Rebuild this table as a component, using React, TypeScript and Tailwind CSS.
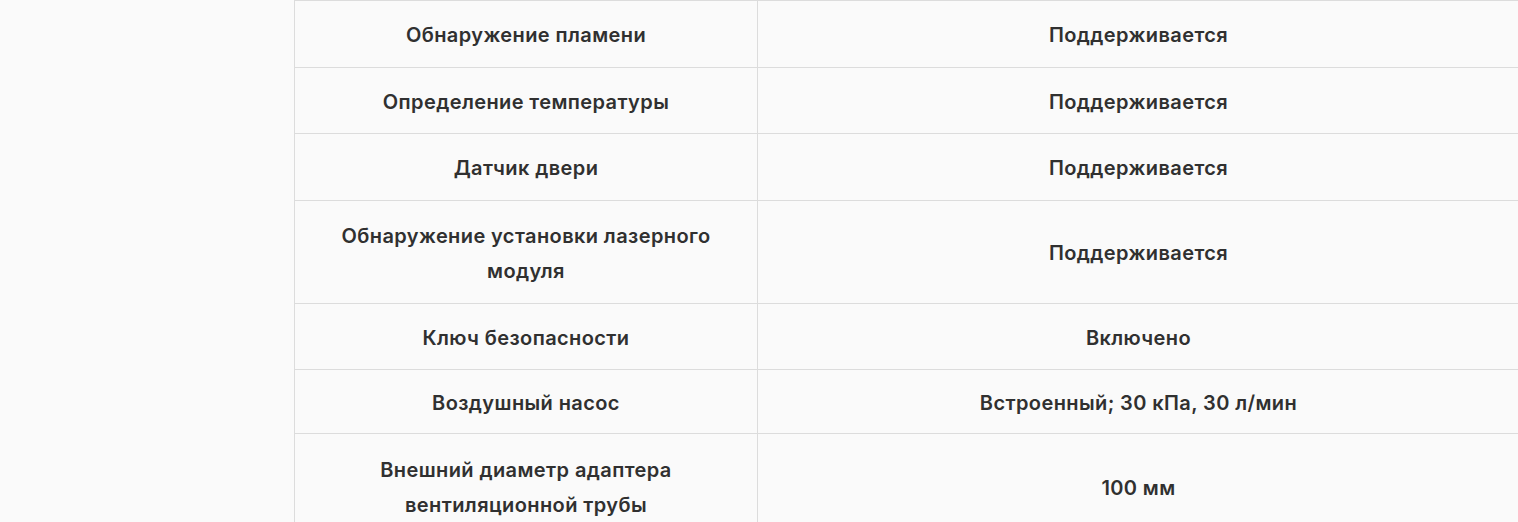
import React from "react";

const rows: { a: string[]; b: string; h: string }[] = [
  { a: ["Обнаружение пламени"], b: "Поддерживается", h: "h-[67px]" },
  { a: ["Определение температуры"], b: "Поддерживается", h: "h-[66px]" },
  { a: ["Датчик двери"], b: "Поддерживается", h: "h-[67px]" },
  { a: ["Обнаружение установки лазерного", "модуля"], b: "Поддерживается", h: "h-[103px]" },
  { a: ["Ключ безопасности"], b: "Включено", h: "h-[66px]" },
  { a: ["Воздушный насос"], b: "Встроенный; 30 кПа, 30 л/мин", h: "h-[64px]" },
  { a: ["Внешний диаметр адаптера", "вентиляционной трубы"], b: "100 мм", h: "h-[106px]" },
];

export default function App() {
  return (
    <div
      className="w-[1518px] h-[522px] overflow-hidden bg-[#fafafa] text-[#303030]"
      style={{ fontFamily: "Inter, 'Noto Sans', sans-serif" }}
    >
      <div className="ml-[294px] w-[1225px] border-l border-[#dcdcdc]">
        {rows.map((r, i) => (
          <div
            key={i}
            className={`grid grid-cols-[462px_1fr] border-t border-[#dcdcdc] ${r.h}`}
          >
            <div className="flex flex-col items-center justify-center pt-[3px] text-center text-[20px] font-semibold leading-[35px] tracking-[0.4px]">
              {r.a.map((t, j) => (
                <span key={j}>{t}</span>
              ))}
            </div>
            <div className="flex items-center justify-center border-l border-[#dcdcdc] pt-[3px] text-center text-[20px] font-semibold leading-[35px] tracking-[0.4px]">
              {r.b}
            </div>
          </div>
        ))}
      </div>
    </div>
  );
}
